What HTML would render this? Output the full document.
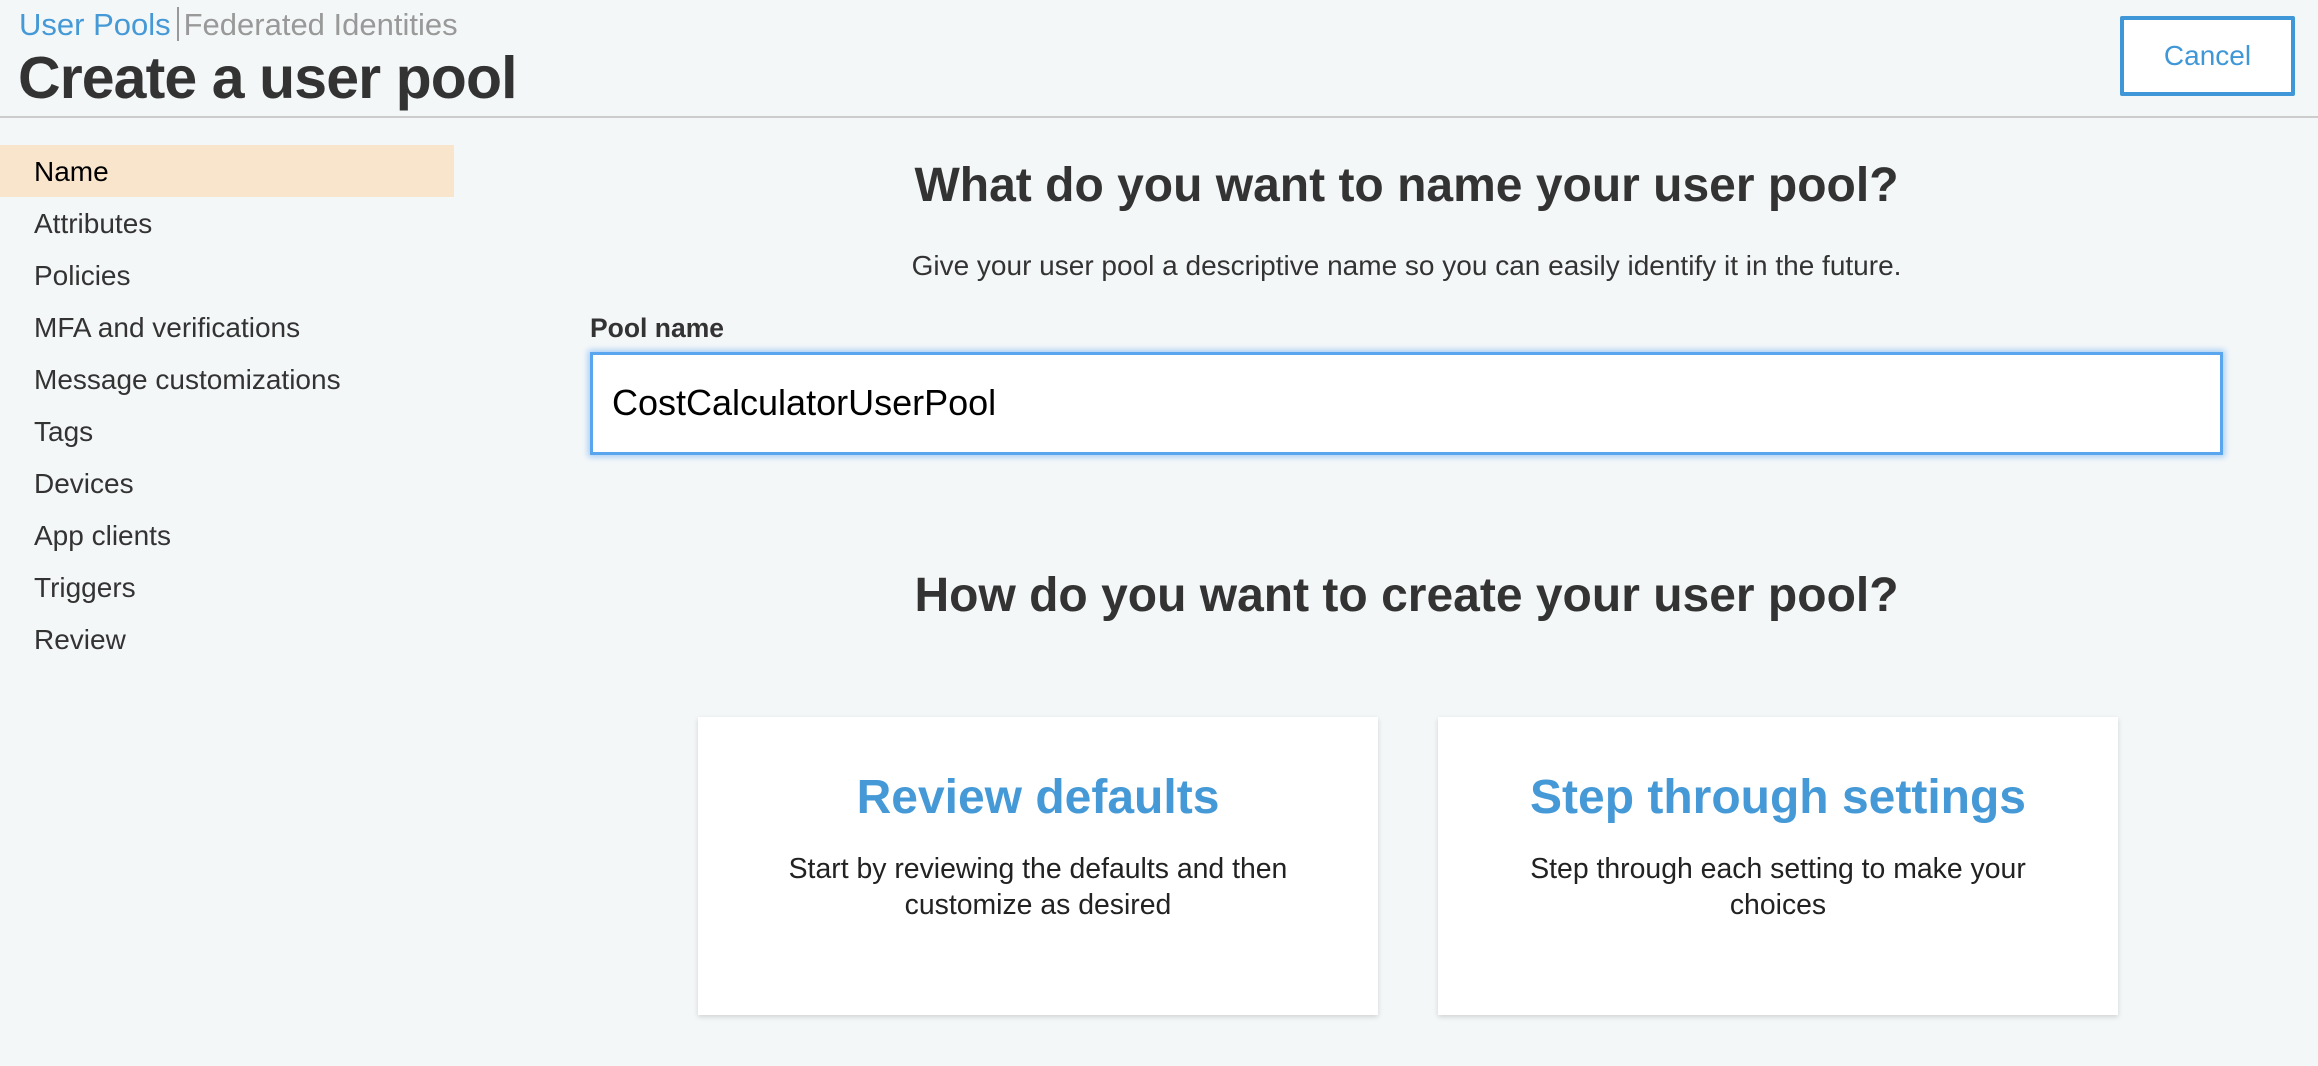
<!DOCTYPE html>
<html><head><meta charset="utf-8"><style>
html,body{margin:0;padding:0;}
body{width:2318px;height:1066px;background:#f4f7f8;font-family:"Liberation Sans",Arial,sans-serif;color:#333;position:relative;overflow:hidden;}
.abs{position:absolute;}
.crumb{left:19px;top:7px;font-size:31px;line-height:36px;white-space:nowrap;}
.crumb .a{color:#4599d6;}
.crumb .sep{display:inline-block;width:2px;height:34px;background:#999;vertical-align:-6px;margin:0 5px 0 6px;}
.crumb .b{color:#999;}
.title{left:18px;top:44px;font-size:59px;font-weight:bold;line-height:68px;color:#333;white-space:nowrap;letter-spacing:-0.9px;}
.hline{left:0;top:116px;width:2318px;height:2px;background:#ccc;}
.cancel{left:2120px;top:16px;width:167px;height:72px;border:4px solid #3f97d7;border-radius:2px;color:#3f97d7;font-size:28px;text-align:center;line-height:72px;background:#fff;}
.active{left:0;top:145px;width:454px;height:52px;background:#f9e5cc;}
.nav{left:34px;top:146px;font-size:28px;line-height:52px;color:#333;}
.nav div:first-child{color:#000;}
.h{left:590px;width:1633px;text-align:center;font-weight:bold;font-size:48px;color:#333;white-space:nowrap;}
.sub{left:590px;width:1633px;text-align:center;font-size:28px;top:249px;line-height:34px;}
.lbl{left:590px;top:312px;font-size:26.5px;font-weight:bold;line-height:32px;}
.input{left:590px;top:352px;width:1627px;height:97px;background:#fff;border:3px solid #5aa6ee;box-shadow:0 0 6px 2px #a5cdf5;}
.input span{position:absolute;left:19px;top:28px;font-size:36px;line-height:40px;color:#000;}
.card{top:717px;width:680px;height:298px;background:#fff;box-shadow:0 2px 5px rgba(0,0,0,.15);text-align:center;}
.card .t{position:absolute;left:0;right:0;top:53px;font-size:48px;font-weight:bold;color:#4599d6;line-height:56px;}
.card .d{position:absolute;left:0;right:0;top:134px;font-size:28.4px;line-height:36px;color:#222;}
</style></head><body>
<div class="abs crumb"><span class="a">User Pools</span><span class="sep"></span><span class="b">Federated Identities</span></div>
<div class="abs title">Create a user pool</div>
<div class="abs hline"></div>
<div class="abs cancel">Cancel</div>
<div class="abs active"></div>
<div class="abs nav">
<div>Name</div><div>Attributes</div><div>Policies</div><div>MFA and verifications</div><div>Message customizations</div><div>Tags</div><div>Devices</div><div>App clients</div><div>Triggers</div><div>Review</div>
</div>
<div class="abs h" style="top:158px;line-height:56px;">What do you want to name your user pool?</div>
<div class="abs sub">Give your user pool a descriptive name so you can easily identify it in the future.</div>
<div class="abs lbl">Pool name</div>
<div class="abs input"><span>CostCalculatorUserPool</span></div>
<div class="abs h" style="top:568px;line-height:56px;">How do you want to create your user pool?</div>
<div class="abs card" style="left:698px;"><div class="t">Review defaults</div><div class="d">Start by reviewing the defaults and then<br>customize as desired</div></div>
<div class="abs card" style="left:1438px;"><div class="t">Step through settings</div><div class="d">Step through each setting to make your<br>choices</div></div>
</body></html>
